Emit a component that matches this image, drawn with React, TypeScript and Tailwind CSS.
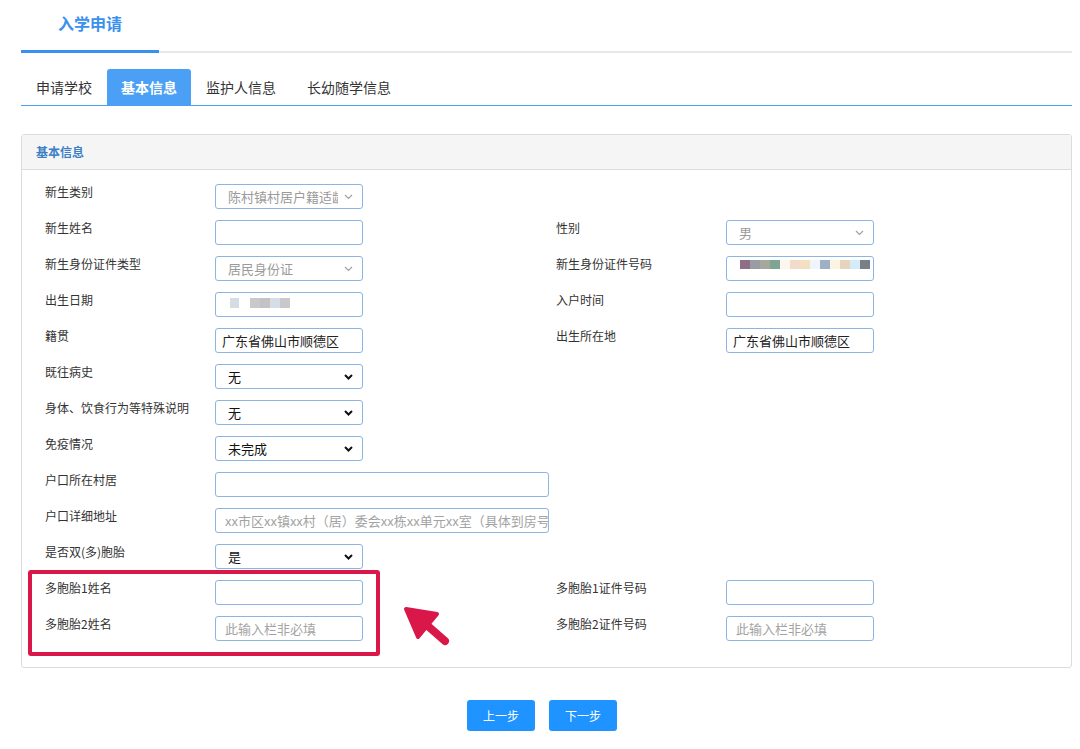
import React from 'react';

type Cell =
  | { kind: 'select'; value: string; disabled?: boolean }
  | { kind: 'input'; value?: string; placeholder?: string; wide?: boolean; mosaic?: 'id' | 'date' };

interface Row {
  label: string;
  cell: Cell;
  right?: { label: string; cell: Cell };
}

const rows: Row[] = [
  { label: '新生类别', cell: { kind: 'select', value: '陈村镇村居户籍适龄', disabled: true } },
  { label: '新生姓名', cell: { kind: 'input' }, right: { label: '性别', cell: { kind: 'select', value: '男', disabled: true } } },
  {
    label: '新生身份证件类型',
    cell: { kind: 'select', value: '居民身份证', disabled: true },
    right: { label: '新生身份证件号码', cell: { kind: 'input', mosaic: 'id' } },
  },
  { label: '出生日期', cell: { kind: 'input', mosaic: 'date' }, right: { label: '入户时间', cell: { kind: 'input' } } },
  {
    label: '籍贯',
    cell: { kind: 'input', value: '广东省佛山市顺德区' },
    right: { label: '出生所在地', cell: { kind: 'input', value: '广东省佛山市顺德区' } },
  },
  { label: '既往病史', cell: { kind: 'select', value: '无' } },
  { label: '身体、饮食行为等特殊说明', cell: { kind: 'select', value: '无' } },
  { label: '免疫情况', cell: { kind: 'select', value: '未完成' } },
  { label: '户口所在村居', cell: { kind: 'input', wide: true } },
  {
    label: '户口详细地址',
    cell: { kind: 'input', wide: true, placeholder: 'xx市区xx镇xx村（居）委会xx栋xx单元xx室（具体到房号）' },
  },
  { label: '是否双(多)胞胎', cell: { kind: 'select', value: '是' } },
  { label: '多胞胎1姓名', cell: { kind: 'input' }, right: { label: '多胞胎1证件号码', cell: { kind: 'input' } } },
  {
    label: '多胞胎2姓名',
    cell: { kind: 'input', placeholder: '此输入栏非必填' },
    right: { label: '多胞胎2证件号码', cell: { kind: 'input', placeholder: '此输入栏非必填' } },
  },
];

const idBlocks = [
  '#8e6f86', '#9a9ca4', '#a6a89c', '#7ea494', '#fcf6ee', '#f0dcc8', '#f4dfc2',
  '#eef6fc', '#9eb0c6', '#fcf4e2', '#e8d4be', '#d4ecfa', '#7a7f86',
];

const Chevron = ({ disabled }: { disabled?: boolean }) =>
  disabled ? (
    <svg width="9" height="6" viewBox="0 0 9 6" className="shrink-0">
      <path d="M1 1l3.5 3.5L8 1" fill="none" stroke="#a0a0a0" strokeWidth="1.2" />
    </svg>
  ) : (
    <svg width="9" height="6" viewBox="0 0 9 6" className="shrink-0">
      <path d="M1 1l3.5 3.5L8 1" fill="none" stroke="#111" strokeWidth="2" />
    </svg>
  );

const Field = ({ cell }: { cell: Cell }) => {
  if (cell.kind === 'select') {
    return (
      <div className="w-[148px] h-[25px] border border-[#8db5e2] rounded-[3px] bg-white flex items-center pl-[12px] pr-[9px] gap-[6px]">
        <span
          className={`flex-1 overflow-hidden whitespace-nowrap text-[13px] leading-[25px] ${
            cell.disabled ? 'text-[#9a9a9a]' : 'text-[#111]'
          }`}
        >
          {cell.value}
        </span>
        <Chevron disabled={cell.disabled} />
      </div>
    );
  }
  return (
    <div
      className={`${cell.wide ? 'w-[334px]' : 'w-[148px]'} h-[25px] border border-[#8db5e2] rounded-[3px] bg-white relative overflow-hidden`}
    >
      {cell.value && (
        <span className="block pl-[6px] text-[13px] leading-[23px] text-[#222] whitespace-nowrap">{cell.value}</span>
      )}
      {cell.placeholder && (
        <span className="block pl-[9px] text-[13px] leading-[23px] text-[#a3a3a3] whitespace-nowrap">
          {cell.placeholder}
        </span>
      )}
      {cell.mosaic === 'id' && (
        <div className="flex pl-[13px] pt-[3px]">
          {idBlocks.map((c, i) => (
            <div key={i} className="w-[10px] h-[9px]" style={{ background: c }} />
          ))}
        </div>
      )}
      {cell.mosaic === 'date' && (
        <div className="flex pl-[14px] pt-[5px]">
          <div className="w-[9px] h-[10px] bg-[#d6dce4]" />
          <div className="w-[11px]" />
          <div className="w-[10px] h-[10px] bg-[#c9c9cc]" />
          <div className="w-[10px] h-[10px] bg-[#c3c3c6]" />
          <div className="w-[10px] h-[10px] bg-[#d5dde6]" />
          <div className="w-[10px] h-[10px] bg-[#c9c9cc]" />
        </div>
      )}
    </div>
  );
};

const LabelCell = ({ label, cell }: { label: string; cell: Cell }) => (
  <div className="flex items-start">
    <div className="w-[170px] shrink-0 text-[12px] leading-[16px] text-[#333]">{label}</div>
    <Field cell={cell} />
  </div>
);

export default function App() {
  return (
    <div className="min-h-screen bg-white font-['Noto_Sans_CJK_SC','Microsoft_YaHei',sans-serif] text-[#333]">
      <div className="ml-[21px] w-[1051px] pb-[19px]">
        {/* page heading */}
        <div className="flex items-end border-b-2 border-[#e6e8ec]">
          <div className="px-[37px] pt-[12px] pb-[16px] text-[16px] leading-[22px] font-bold text-[#3a90ee] border-b-[3px] border-[#3a90ee] -mb-[2px]">
            入学申请
          </div>
        </div>

        {/* tabs */}
        <div className="mt-[16px] flex border-b-[1px] border-b-[#4a9ff5] text-[14px] leading-[36px]">
          <div className="px-[15px] text-[#333]">申请学校</div>
          <div className="px-[14px] bg-[#4ba0f6] text-white font-bold rounded-t-[3px]">基本信息</div>
          <div className="px-[15px] text-[#333]">监护人信息</div>
          <div className="pl-[16px] text-[#333]">长幼随学信息</div>
        </div>

        {/* panel */}
        <div className="mt-[28px] border border-[#dcdcdc] rounded-[3px] relative">
          <div className="h-[35px] bg-[#f5f5f5] border-b border-[#dcdcdc] pl-[14px] text-[12px] leading-[34px] font-bold text-[#3b7fc7]">
            基本信息
          </div>
          <div className="pt-[14px] pb-[26px] pl-[23px] flex flex-col gap-[11px]">
            {rows.map((r, i) => (
              <div key={i} className="grid grid-cols-[511px_1fr]">
                <LabelCell label={r.label} cell={r.cell} />
                {r.right ? <LabelCell label={r.right.label} cell={r.right.cell} /> : <div />}
              </div>
            ))}
          </div>

          {/* annotation */}
          <div className="absolute left-[6px] top-[435px] w-[352px] h-[86px] border-4 border-[#d91748] rounded-[3px] pointer-events-none" />
          <svg className="absolute left-[379px] top-[465px]" width="52" height="50" viewBox="0 0 52 50">
            <polygon points="5,9 36,14 17,37" fill="#d91748" stroke="#d91748" strokeWidth="4" strokeLinejoin="round" />
            <line x1="20" y1="20" x2="44" y2="41" stroke="#d91748" strokeWidth="8" strokeLinecap="round" />
          </svg>
        </div>

        {/* actions */}
        <div className="mt-[32px] flex justify-center gap-[14px] pr-[9px]">
          <button className="w-[68px] h-[31px] rounded-[3px] bg-[#1f93ff] text-white text-[12px]">上一步</button>
          <button className="w-[68px] h-[31px] rounded-[3px] bg-[#1f93ff] text-white text-[12px]">下一步</button>
        </div>
      </div>
    </div>
  );
}
